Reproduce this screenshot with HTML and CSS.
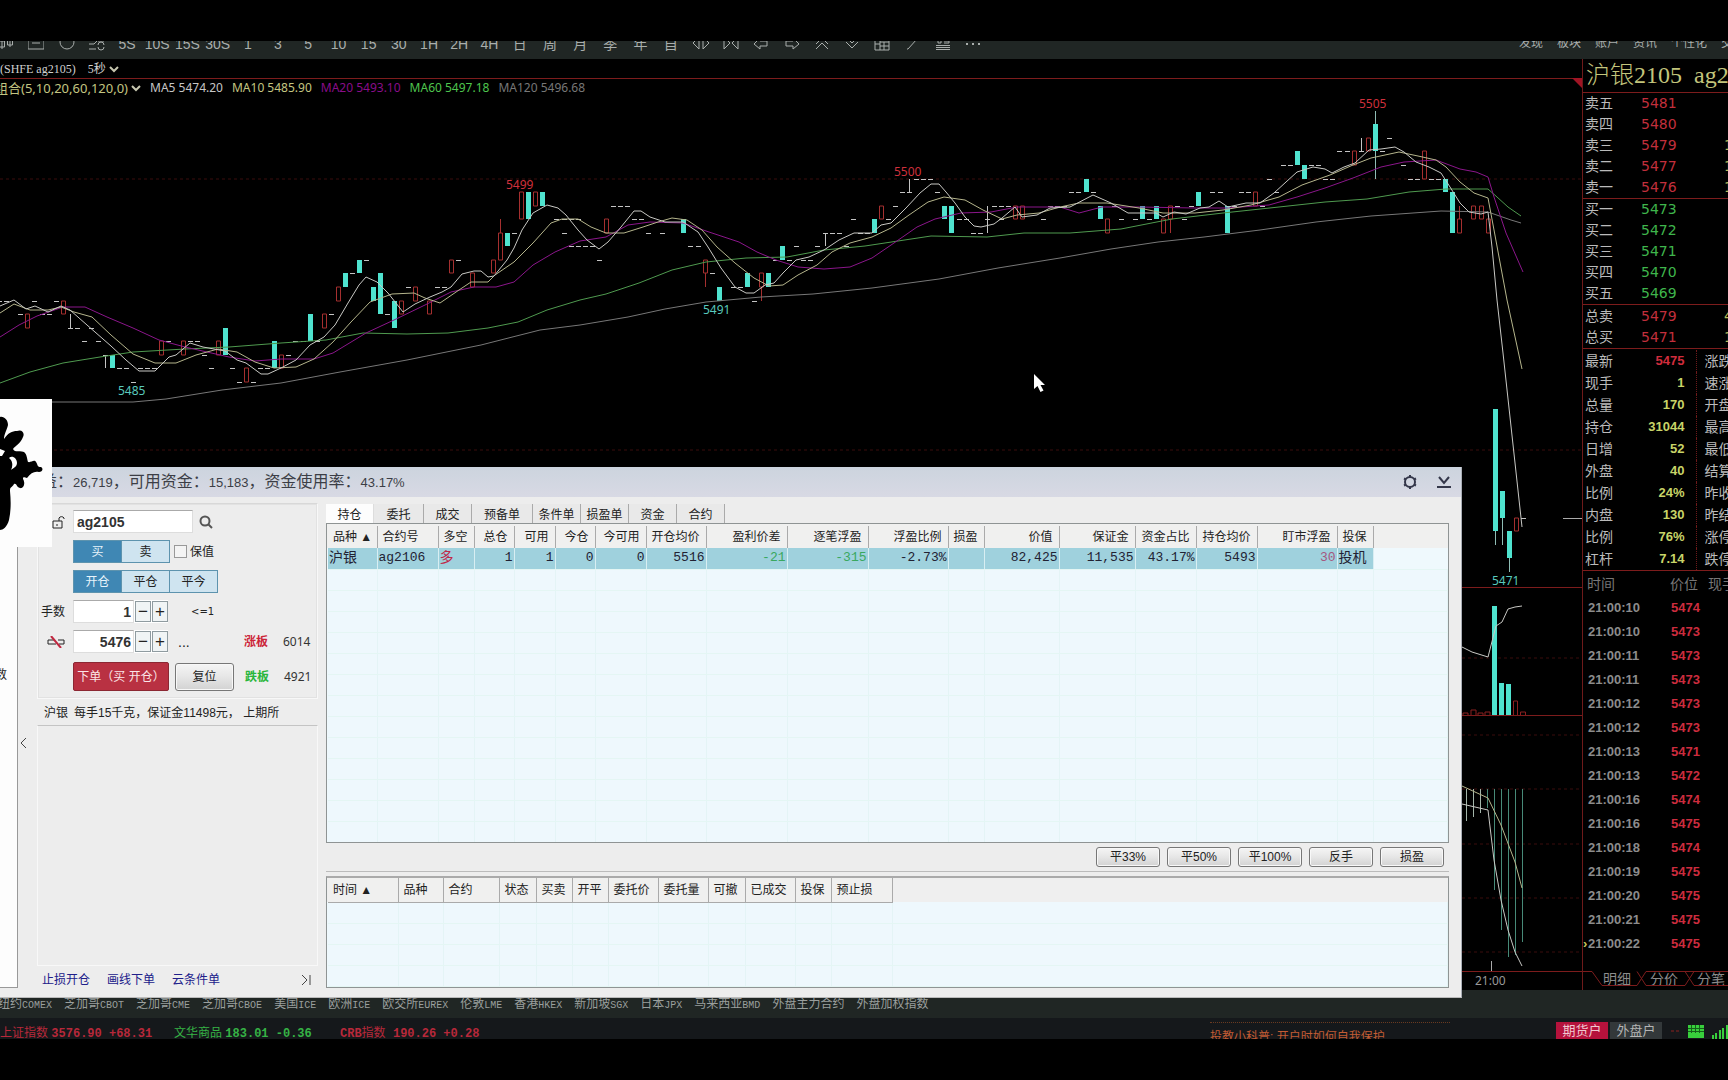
FILE: index.html
```html
<!DOCTYPE html>
<html lang="zh-CN">
<head>
<meta charset="utf-8">
<title>沪银2105 ag2105</title>
<link rel="stylesheet" href="styles.css">
</head>
<body>
<div class="app">
  <header class="toolbar">
    <nav class="periods" id="periods">
      <span><svg viewBox="0 0 16 16"><path d="M4 3v10M1.500 5h5v6h-5zM12 1v10M9.500 3h5v6h-5z"/></svg></span>
      <span><svg viewBox="0 0 16 16"><path d="M0 1v12h16V1M4 7h8"/></svg></span>
      <span><svg viewBox="0 0 16 16"><circle cx="8" cy="6" r="7"/></svg></span>
      <span><svg viewBox="0 0 16 16"><path d="M0 8h5l3-3M0 13h7M9 9a3 3 0 0 1 6 0M15 11a3 3 0 0 1-6 0M9 5h6"/></svg></span>
      <span>5S</span><span>10S</span><span>15S</span><span>30S</span><span>1</span><span>3</span><span>5</span><span>10</span><span>15</span><span>30</span><span>1H</span><span>2H</span><span>4H</span><span>日</span><span>周</span><span>月</span><span>季</span><span>年</span><span>自</span>
      <span><svg viewBox="0 0 16 16"><path d="M6 1v12L0 7zM10 1v12l6-6z"/></svg></span>
      <span><svg viewBox="0 0 16 16"><path d="M1 1v12l6-6zM15 1v12L9 7z"/></svg></span>
      <span><svg viewBox="0 0 16 16"><path d="M7 2 1 8l6 5v-3h7V5H7z"/></svg></span>
      <span><svg viewBox="0 0 16 16"><path d="m9 2 6 6-6 5v-3H2V5h7z"/></svg></span>
      <span><svg viewBox="0 0 16 16"><path d="m2 8 6-6 6 6M2 13l6-6 6 6"/></svg></span>
      <span><svg viewBox="0 0 16 16"><path d="m2 6 6 6 6-6M2 1l6 6 6-6"/></svg></span>
      <span><svg viewBox="0 0 16 16"><path d="M1 1h14v13H1zM6 1v13M6 6h9M6 10h9M10 6v8M1 8h5"/></svg></span>
      <span><svg viewBox="0 0 16 16"><path d="M3 13h1l9-10"/></svg></span>
      <span><svg viewBox="0 0 16 16"><path d="M1 9.500h14M1 11.500h14M1 13.500h14M3 2v5h3V2M9 7h5V5H9V2h5"/></svg></span>
      <span><svg viewBox="0 0 16 16"><path class="dots" d="M1 8h2M7 8h2M13 8h2"/></svg></span>
    </nav>
    <nav class="menus"><a href="#">发现</a><a href="#">板块</a><a href="#">账户</a><a href="#">资讯</a><a href="#">个性化</a><a href="#">交易</a></nav>
  </header>

  <main class="workspace">
    <section class="chart">
      <div class="symbol"><span>(SHFE ag2105)</span><span>5秒</span><svg class="chev" viewBox="0 0 10 8"><path d="m1 2 4 4 4-4"/></svg></div>
      <div class="legend"><span class="ma10">组合(5,10,20,60,120,0)</span><svg class="chev" viewBox="0 0 10 8"><path d="m1 2 4 4 4-4"/></svg><span class="ma5">MA5 5474.20</span><span class="ma10">MA10 5485.90</span><span class="ma20">MA20 5493.10</span><span class="ma60">MA60 5497.18</span><span class="ma120">MA120 5496.68</span></div>
      <svg class="plot" id="plot" viewBox="0 96 1582 894" preserveAspectRatio="xMaxYMin meet">
        <g class="grid"><path d="M0 179H1582M0 450H1582M1462 658H1582M1462 735H1582M1462 789H1582M1462 844H1582M1462 898H1582M1462 952H1582"/></g>
        <path class="frame" d="M1462 587.500H1582M1462 715.500H1582M1462 971.500H1582"/>
        <g id="candles"></g>
        <polyline class="line l120" points="52,402 133,402 166,399 222,390 281,383 340,372 407,360 481,345 540,330 580,325 628,317 665,309 706,302 761,297 813,294 872,288 939,279 998,268 1060,258 1111,249 1158,242 1204,237 1260,230 1316,222 1371,216 1441,211 1488,212 1511,220 1521,223"/>
        <polyline class="line l60" points="0,383 30,372 63,363 100,357 133,352 185,349 229,347 281,343 326,340 363,333 407,334 448,333 488,328 518,322 547,310 580,300 606,294 639,283 672,270 706,262 746,258 787,257 824,250 865,246 898,241 931,236 987,237 1024,233 1070,233 1121,229 1172,219 1223,213 1279,207 1325,202 1367,199 1409,192 1446,189 1488,189 1497,197 1508,207 1521,216"/>
        <polyline class="line l20" points="0,337 19,325 37,316 63,307 85,307 107,317 133,328 159,340 185,347 207,352 229,357 255,361 281,359 314,359 333,353 366,333 394,320 425,305 451,292 474,287 496,287 514,282 533,265 555,252 580,241 606,237 628,225 650,222 683,223 709,232 739,242 757,252 776,260 798,267 824,269 850,267 872,258 894,243 917,227 935,219 961,213 991,212 1017,207 1060,207 1079,213 1102,207 1139,207 1195,208 1228,208 1269,205 1297,197 1325,188 1353,178 1381,167 1404,162 1436,160 1460,169 1476,172 1488,177 1494,197 1506,233 1523,272"/>
        <polyline class="line l10" points="0,313 14,304 30,310 48,310 61,307 74,312 92,317 111,335 133,354 155,363 176,363 196,355 218,349 237,352 255,362 274,368 296,367 314,359 333,342 351,322 370,302 392,294 414,293 425,298 440,303 459,290 471,282 488,282 495,275 514,262 533,243 551,223 562,219 578,219 591,227 606,233 624,233 643,227 658,222 672,218 687,220 702,230 717,247 735,263 754,278 769,286 783,285 798,275 817,265 832,252 850,243 872,237 891,228 909,215 928,202 944,197 965,200 983,210 1002,219 1017,215 1039,213 1060,207 1079,203 1107,203 1139,208 1163,213 1195,213 1223,210 1251,205 1279,197 1302,185 1330,175 1353,165 1371,158 1399,152 1418,156 1436,160 1446,167 1460,182 1474,193 1488,198 1494,230 1507,300 1522,369"/>
        <polyline class="line l5" points="0,306 14,300 26,309 35,306 48,312 61,306 70,310 87,325 111,346 126,360 139,371 155,371 169,357 176,355 190,343 203,347 225,351 237,360 246,363 261,374 268,374 281,368 296,360 310,345 324,337 335,325 348,303 359,285 366,277 377,282 388,293 403,312 415,304 430,297 442,292 451,287 462,274 474,271 481,271 488,277 494,276 507,260 514,248 522,230 533,213 547,205 558,208 566,215 578,230 587,240 599,249 608,242 621,227 634,211 641,211 650,217 665,222 683,222 698,232 708,247 721,268 735,287 746,293 754,293 765,285 774,283 783,273 796,260 809,257 824,250 839,240 854,233 872,233 881,225 891,223 906,208 920,193 931,184 939,184 946,192 955,203 965,217 974,226 981,227 994,224 1002,218 1015,207 1022,217 1037,215 1050,208 1070,207 1093,195 1111,203 1128,213 1156,213 1163,217 1174,212 1186,214 1200,208 1209,207 1219,201 1228,207 1246,203 1260,203 1274,193 1286,182 1297,172 1313,167 1325,169 1332,173 1344,167 1355,163 1369,150 1381,149 1395,147 1404,152 1416,162 1429,167 1441,173 1450,187 1460,203 1469,212 1481,214 1488,212 1492,247 1497,300 1503,353 1522,527"/>
        <path class="volume" d="M1492 606h5v109h-5zM1499 683h5v32h-5zM1506 684h5v31h-5z"/>
        <path class="volume-up" d="M1463 715v-2h5v2M1471 715v-5h5v5M1478 715v-2h5v2M1485 715v-3h5v3M1513.500 715v-14h4v14M1520.500 715v-3h5v3"/>
        <path class="macd-bars" d="M1494.500 789V890M1501.500 789V930M1508.500 789V957M1515.500 789V955M1522.500 789V942M1487.500 789V808"/>
        <path class="macd-pale" d="M1466.500 789V821M1473.500 789V817M1480.500 789V813"/>
        <polyline class="line l5" points="1462,647 1472,652 1488,657 1496,626 1502,622 1508,609 1515,607 1522,606"/>
        <polyline class="line l10" points="1462,786 1488,798 1501,825 1515,862 1522,888"/>
        <polyline class="line l5" points="1462,804 1488,810 1494,860 1501,900 1508,930 1515,952 1522,966"/>
        <path class="tick" d="M1491.500 961V971M1563 518.500H1582"/>
        <g class="mark up"><text x="506" y="189">5499</text><text x="894" y="176">5500</text><text x="1359" y="108">5505</text></g>
        <g class="mark down"><text x="118" y="395">5485</text><text x="703" y="314">5491</text><text x="1492" y="585">5471</text></g>
        <g class="mark time"><text x="1475" y="985">21:00</text></g>
        <path class="pointer" d="M1034 374v15l3.500-3 3 6 3-1.500-3-5.500h4.500z"/>
      </svg>
      <i class="corner"></i>
    </section>

    <aside class="quote">
      <h1>沪银2105 <span>ag2105</span></h1>
      <table class="depth sell"><tbody>
        <tr><th>卖五</th><td>5481</td><td></td></tr>
        <tr><th>卖四</th><td>5480</td><td></td></tr>
        <tr><th>卖三</th><td>5479</td><td>1</td></tr>
        <tr><th>卖二</th><td>5477</td><td>1</td></tr>
        <tr><th>卖一</th><td>5476</td><td>1</td></tr>
      </tbody></table>
      <table class="depth buy"><tbody>
        <tr><th>买一</th><td>5473</td><td></td></tr>
        <tr><th>买二</th><td>5472</td><td></td></tr>
        <tr><th>买三</th><td>5471</td><td></td></tr>
        <tr><th>买四</th><td>5470</td><td></td></tr>
        <tr><th>买五</th><td>5469</td><td></td></tr>
      </tbody></table>
      <table class="depth sell sums"><tbody>
        <tr><th>总卖</th><td>5479</td><td>4</td></tr>
        <tr><th>总买</th><td>5471</td><td>1</td></tr>
      </tbody></table>
      <table class="stats"><tbody>
        <tr><th>最新</th><td class="red">5475</td><th>涨跌</th></tr>
        <tr><th>现手</th><td>1</td><th>速涨</th></tr>
        <tr><th>总量</th><td>170</td><th>开盘</th></tr>
        <tr><th>持仓</th><td>31044</td><th>最高</th></tr>
        <tr><th>日增</th><td>52</td><th>最低</th></tr>
        <tr><th>外盘</th><td>40</td><th>结算</th></tr>
        <tr><th>比例</th><td>24%</td><th>昨收</th></tr>
        <tr><th>内盘</th><td>130</td><th>昨结</th></tr>
        <tr><th>比例</th><td>76%</td><th>涨停</th></tr>
        <tr><th>杠杆</th><td>7.14</td><th>跌停</th></tr>
      </tbody></table>
      <table class="trades">
        <thead><tr><th>时间</th><th>价位</th><th>现手</th></tr></thead>
        <tbody>
        <tr><td>21:00:10</td><td>5474</td><td></td></tr>
        <tr><td>21:00:10</td><td>5473</td><td></td></tr>
        <tr><td>21:00:11</td><td>5473</td><td></td></tr>
        <tr><td>21:00:11</td><td>5473</td><td></td></tr>
        <tr><td>21:00:12</td><td>5473</td><td></td></tr>
        <tr><td>21:00:12</td><td>5473</td><td></td></tr>
        <tr><td>21:00:13</td><td>5471</td><td></td></tr>
        <tr><td>21:00:13</td><td>5472</td><td></td></tr>
        <tr><td>21:00:16</td><td>5474</td><td></td></tr>
        <tr><td>21:00:16</td><td>5475</td><td></td></tr>
        <tr><td>21:00:18</td><td>5474</td><td></td></tr>
        <tr><td>21:00:19</td><td>5475</td><td></td></tr>
        <tr><td>21:00:20</td><td>5475</td><td></td></tr>
        <tr><td>21:00:21</td><td>5475</td><td></td></tr>
        <tr class="now"><td>21:00:22</td><td>5475</td><td></td></tr>
        </tbody>
      </table>
      <nav class="quote-tabs">
        <svg viewBox="0 0 145 16"><path d="M0 .5H9L19 14.500H54L63 .5H145M54 .500 63 14.500H102L111 .5M102 .5 111 14.500H145"/></svg>
        <a href="#">明细</a><a href="#">分价</a><a href="#">分笔</a>
      </nav>
    </aside>

    <section class="window">
      <div class="titlebar">
        <p>益：<b>26,719</b>，可用资金：<b>15,183</b>，资金使用率：<b>43.17%</b></p>
        <button class="icon" aria-label="设置"><svg viewBox="0 0 16 16"><circle cx="8" cy="8" r="5"/><path d="M8 1v2M8 13v2M2 4.500l2 1M12 10.500l2 1M14 4.500l-2 1M4 10.500l-2 1"/></svg></button>
        <button class="icon" aria-label="最小化"><svg viewBox="0 0 16 16"><path d="m3 3 5 6 5-6M1 13h14"/></svg></button>
      </div>
      <div class="panes">
        <div class="side"><span>数</span></div>
        <button class="fold" aria-label="收起"><svg viewBox="0 0 8 12"><path d="M6 1 1 6l5 5"/></svg></button>
        <div class="order">
          <form class="ticket">
            <div class="row">
              <span class="lead"><svg class="lock" viewBox="0 0 14 15"><path d="M1 7h9v7H1zM5 10v2M7 7V4a3 3 0 0 1 5 0v1"/></svg></span>
              <input class="code" type="text" value="ag2105" aria-label="合约">
              <svg class="search" viewBox="0 0 14 14"><circle cx="6" cy="6" r="4.500"/><path d="m9 9 4 4"/></svg>
            </div>
            <div class="row"><span class="lead"></span><span class="seg"><button type="button" class="on">买</button><button type="button">卖</button></span><label class="hedge"><input type="checkbox">保值</label></div>
            <div class="row"><span class="lead"></span><span class="seg"><button type="button" class="on">开仓</button><button type="button">平仓</button><button type="button">平今</button></span></div>
            <div class="row"><label class="lead" for="qty">手数</label><span class="spin"><input id="qty" type="text" value="1"><button type="button">−</button><button type="button">+</button></span><span class="cap">&lt;=1</span></div>
            <div class="row"><span class="lead"><svg class="nolink" viewBox="0 0 18 12"><path d="M7 4H1v4h8M11 4h6v4h-5"/><path class="slash" d="m4 0 10 12"/></svg></span><span class="spin"><input type="text" value="5476" aria-label="价格"><button type="button">−</button><button type="button">+</button></span><span class="more">...</span><span class="limit up">涨板</span><span class="bound">6014</span></div>
            <div class="row last"><span class="lead"></span><button type="button" class="submit">下单（买 开仓）</button><button type="button" class="btn reset">复位</button><span class="limit down">跌板</span><span class="bound">4921</span></div>
          </form>
          <p class="info"><span>沪银</span>每手15千克，保证金11498元， 上期所</p>
          <div class="blank"></div>
          <nav class="links"><a href="#">止损开仓</a><a href="#">画线下单</a><a href="#">云条件单</a><svg viewBox="0 0 10 12"><path d="m1 1 5 5-5 5M9 1v10"/></svg></nav>
        </div>
        <div class="books">
          <nav class="tabs"><button class="on">持仓</button><button>委托</button><button>成交</button><button class="wide">预备单</button><button>条件单</button><button>损盈单</button><button>资金</button><button>合约</button></nav>
          <div class="sheet positions">
            <table>
              <colgroup><col style="width:49px"><col style="width:61px"><col style="width:36px"><col style="width:40px"><col style="width:41px"><col style="width:40px"><col style="width:51px"><col style="width:60px"><col style="width:81px"><col style="width:81px"><col style="width:80px"><col style="width:36px"><col style="width:75px"><col style="width:76px"><col style="width:61px"><col style="width:61px"><col style="width:80px"><col style="width:36px"><col></colgroup>
              <thead><tr><th class="l">品种 ▲</th><th class="l">合约号</th><th>多空</th><th>总仓</th><th>可用</th><th>今仓</th><th>今可用</th><th>开仓均价</th><th>盈利价差</th><th>逐笔浮盈</th><th>浮盈比例</th><th>损盈</th><th>价值</th><th>保证金</th><th>资金占比</th><th>持仓均价</th><th>盯市浮盈</th><th>投保</th><th class="rest"></th></tr></thead>
              <tbody data-blank="13"><tr class="sel"><td class="l">沪银</td><td class="l">ag2106</td><td class="l r">多</td><td>1</td><td>1</td><td>0</td><td>0</td><td>5516</td><td class="g">-21</td><td class="g">-315</td><td>-2.73%</td><td></td><td>82,425</td><td>11,535</td><td>43.17%</td><td>5493</td><td class="m">30</td><td class="l">投机</td><td class="rest"></td></tr></tbody>
            </table>
          </div>
          <div class="actions"><button class="btn">平33%</button><button class="btn">平50%</button><button class="btn">平100%</button><button class="btn">反手</button><button class="btn">损盈</button></div>
          <div class="sheet orders">
            <table>
              <colgroup><col style="width:70px"><col style="width:45px"><col style="width:56px"><col style="width:37px"><col style="width:36px"><col style="width:36px"><col style="width:50px"><col style="width:50px"><col style="width:37px"><col style="width:50px"><col style="width:36px"><col style="width:61px"><col></colgroup>
              <thead><tr><th>时间 ▲</th><th>品种</th><th>合约</th><th>状态</th><th>买卖</th><th>开平</th><th>委托价</th><th>委托量</th><th>可撤</th><th>已成交</th><th>投保</th><th>预止损</th><th class="rest"></th></tr></thead>
              <tbody data-blank="4"></tbody>
            </table>
          </div>
        </div>
      </div>
      <svg class="brush" viewBox="0 0 52 148"><path fill-rule="evenodd" d="M0 18C4 17 8 21 8 26C7 31 4 35 4 40C8 34 12 32 17 32C22 30 25 34 23 38C21 44 15 47 13 50C15 54 20 51 24 53C27 55 27 60 28 63C31 64 34 60 36 63C38 66 37 68 41 68C44 70 42 73 39 73C34 72 31 74 27 79C25 79 23 77 23 80C26 85 23 90 20 89C16 88 17 84 14 85C12 89 10 87 10 92C11 102 11 112 9 121C7 128 3 131 0 131ZM9 59C12 56 17 59 17 64C17 68 13 69 11 71C13 67 13 62 9 59ZM0 50 5 52 2 57 0 57Z"/></svg>
    </section>
  </main>

  <nav class="markets"><a href="#">纽约<b>COMEX</b></a><a href="#">芝加哥<b>CBOT</b></a><a href="#">芝加哥<b>CME</b></a><a href="#">芝加哥<b>CBOE</b></a><a href="#">美国<b>ICE</b></a><a href="#">欧洲<b>ICE</b></a><a href="#">欧交所<b>EUREX</b></a><a href="#">伦敦<b>LME</b></a><a href="#">香港<b>HKEX</b></a><a href="#">新加坡<b>SGX</b></a><a href="#">日本<b>JPX</b></a><a href="#">马来西亚<b>BMD</b></a><a href="#">外盘主力合约</a><a href="#">外盘加权指数</a></nav>
  <footer class="status">
    <span class="idx red">上证指数 <b>3576.90 +68.31</b></span>
    <span class="idx green">文华商品 <b>183.01 -0.36</b></span>
    <span class="idx red"><b>CRB</b>指数 <b class="far">190.26 +0.28</b></span>
    <p class="news">投教小科普: 开户时如何自我保护</p>
    <button class="acct on">期货户</button><button class="acct">外盘户</button>
    <svg class="signal" viewBox="0 0 64 17"><path class="dash" d="M7 9h3M12 9h3"/><path class="net" d="M24 3h16v13H24z"/><path class="mesh" d="M24 6.500h16M24 9.500h16M27.500 3v8M31.500 3v8M35.500 3v8"/><path class="net" d="M48 13h2v4h-2zM51 11h2v6h-2zM55 8h2v9h-2zM58 6h2v11h-2zM62 3h2v14h-2z"/></svg>
  </footer>
</div>
<script src="chart.js"></script>
</body>
</html>
```
FILE: styles.css
```css
* { box-sizing: border-box; }
html { background: #000; }
body {
  margin: 0;
  background: #000;
  font: 12px/16px "Liberation Sans", "Noto Sans CJK SC", sans-serif;
  color: #ccc;
}
p, h1 { margin: 0; font-weight: normal; }
a { color: inherit; text-decoration: none; }
button { font: inherit; color: inherit; padding: 0; margin: 0; border: 0; background: none; }
table { border-collapse: collapse; table-layout: fixed; width: 100%; }
th, td { padding: 0; font-weight: normal; text-align: left; white-space: nowrap; overflow: hidden; }
svg { fill: none; stroke: currentColor; display: block; flex: none; }

.app { min-height: 100vh; padding: 41px 0; display: flex; flex-direction: column; overflow: hidden; }

/* top toolbar, scrolled partly out of view */
.toolbar { height: 18px; background: #202624; display: flex; justify-content: space-between; overflow: hidden; color: #a9aeac; }
.periods { width: 997px; margin: -7px 0 0 -9px; display: grid; grid-template-columns: repeat(33, 1fr); font-size: 14px; line-height: 20px; }
.periods span { display: flex; justify-content: center; align-items: center; height: 20px; }
.periods svg { width: 16px; height: 16px; }
.periods .dots { stroke-width: 2; }
.menus { margin: -6px 0 0; width: 209px; display: flex; gap: 14px; white-space: nowrap; font-size: 12px; line-height: 16px; }

.workspace { position: relative; flex: 1; display: flex; min-height: 0; }
.chart { position: relative; flex: 1; min-width: 0; display: flex; flex-direction: column; border-right: 1px solid #6e1a1a; }
.symbol { height: 20px; border-bottom: 1px solid #7d1c1c; display: flex; align-items: center; font: 12px/18px "Liberation Serif", "Noto Sans CJK SC", serif; color: #d0d0d0; }
.symbol span + span { margin-left: 12px; }
.chev { width: 10px; height: 8px; margin: 0 0 0 3px; stroke-width: 2; color: #c8c8b0; }
.legend { height: 17px; display: flex; align-items: center; font: 12px/16px "Noto Sans", "Noto Sans CJK SC", sans-serif; white-space: nowrap; }
.legend span { margin-left: 9px; }
.legend span:first-child { margin-left: -5px; font-size: 13px; }
.ma5 { color: #c6c6c6; } .ma10 { color: #c4c682; } .ma20 { color: #8a0d8a; } .ma60 { color: #4ec54e; } .ma120 { color: #777; }
.plot { flex: 1; width: 100%; min-height: 0; overflow: hidden; }
.corner { position: absolute; right: 0; top: 19px; border: 5px solid transparent; border-top-color: #a01424; border-right-color: #a01424; }
.grid { stroke: #3a0c0c; stroke-dasharray: 3 3; }
.frame { stroke: #7d1c1c; }
.line { stroke-width: 1; }
.l5 { stroke: #c8c8c4; } .l10 { stroke: #b5b58c; } .l20 { stroke: #8b168b; } .l60 { stroke: #4f9a4f; } .l120 { stroke: #777; }
.doji { stroke: #c4c4c4; } .rise { stroke: #a52f2f; } .fall { fill: #4fe3cf; stroke: none; } .fallwick { stroke: #8fbdb5; }
.volume { fill: #4fe3cf; stroke: none; } .volume-up { stroke: #8a2020; }
.macd-bars { stroke: #478a78; } .macd-pale { stroke: #a3b5aa; } .tick { stroke: #aaa; }
.mark { font: 12px "Noto Sans", sans-serif; stroke: none; }
.mark.up { fill: #d0303c; } .mark.down { fill: #58c9bd; } .mark.time { fill: #999; }
.pointer { fill: #fff; stroke: none; }

/* quote column */
.quote { width: 145px; flex: none; overflow: hidden; display: flex; flex-direction: column; }
.quote h1 { height: 34px; padding-left: 3px; border-bottom: 1px solid #7d1c1c; font: 24px/33px "Liberation Serif", "Noto Sans CJK SC", serif; font-weight: 300; color: #c3c57c; white-space: nowrap; }
.quote h1 span { margin-left: 6px; }
.depth { border-bottom: 1px solid #7d1c1c; font: 14px/21px "DejaVu Sans", "Noto Sans CJK SC", sans-serif; }
.depth tr { height: 21px; }
.depth th { width: 58px; padding-left: 2px; color: #bbb; }
.depth td { width: 83px; }
.depth td + td { width: 4px; color: #b9bd5a; }
.sell td { color: #c22f3c; } .buy td { color: #3fb54c; }
.sums { margin-top: 1px; }
.stats { margin-top: 1px; border-bottom: 1px solid #7d1c1c; font: 13px/22px "Liberation Sans", "Noto Sans CJK SC", sans-serif; }
.stats tr { height: 22px; }
.stats th { width: 44px; padding-left: 2px; color: #bbb; font-size: 14px; }
.stats td { width: 69px; text-align: right; padding-right: 11px; font-weight: bold; color: #c8d468; border-right: 1px dotted #6e1a1a; }
.stats td.red { color: #d02c3c; }
.stats td + th { width: 32px; padding-left: 8px; }
.trades { margin-top: 1px; font: 13px/24px "Liberation Sans", "Noto Sans CJK SC", sans-serif; color: #8c8c8c; }
.trades th { height: 24px; width: 87px; padding-left: 4px; font-size: 14px; color: #777; }
.trades th + th { width: 38px; padding-left: 0; }
.trades th + th + th { width: 20px; }
.trades td { height: 24px; padding-left: 5px; font-weight: bold; }
.trades td + td { color: #cc2c3e; padding-left: 1px; }
.trades .now td:first-child { padding-left: 0; }
.trades .now td:first-child::before { content: "›"; display: inline-block; width: 5px; color: #c8c860; }
.quote-tabs { position: relative; margin-top: auto; height: 19px; padding-left: 20px; display: flex; gap: 19px; font-size: 14px; line-height: 16px; color: #8c8c8c; white-space: nowrap; }
.quote-tabs svg { position: absolute; left: 0; top: 0; width: 145px; height: 16px; color: #7d1c1c; }

/* trading window */
.window { position: absolute; left: 0; right: 266px; top: 408px; bottom: -8px; background: #ededed; color: #222; display: flex; flex-direction: column; border-right: 1px solid #a9adb5; border-bottom: 1px solid #bbb; }
.titlebar { height: 30px; flex: none; padding: 0 9px 0 41px; display: flex; align-items: center; gap: 18px; background: linear-gradient(#ccd4de, #d8d9e4); }
.titlebar p { flex: 1; font-size: 16px; line-height: 30px; color: #3c3e46; white-space: nowrap; }
.titlebar b { font-size: 13px; font-weight: normal; }
.icon svg { width: 16px; height: 16px; stroke-width: 2; color: #34374a; }
.panes { flex: 1; min-height: 0; display: flex; padding: 6px 12px 9px 0; }
.side { width: 18px; flex: none; margin-top: -6px; padding-top: 170px; background: #fdfdfd; border-right: 1px solid #999; border-bottom: 1px solid #999; overflow: hidden; }
.side span { margin-left: -5px; }
.fold { width: 19px; flex: none; color: #444; padding: 0 0 6px 2px; }
.fold svg { width: 8px; height: 12px; }
.order { width: 281px; flex: none; display: flex; flex-direction: column; margin-bottom: -6px; }
.ticket { border: 1px solid #f8f8f8; border-top-color: #d8d8d8; outline: 1px solid #e2e2e2; outline-offset: -2px; padding: 6px 0 7px; display: flex; flex-direction: column; gap: 7px; }
.row { height: 23px; display: flex; align-items: center; }
.row.last { height: 31px; padding-top: 2px; }
.lead { width: 35px; padding-left: 3px; flex: none; }
.lock { width: 14px; height: 15px; margin-left: 11px; }
.nolink { width: 18px; height: 12px; margin-left: 6px; }
.slash { stroke: #c02840; stroke-width: 2; }
.ticket input[type=text] { border: 1px solid #ddd; border-top-color: #aaa; background: #fff; height: 23px; padding: 0 3px; font: bold 14px/20px "Liberation Sans", sans-serif; color: #333; min-width: 0; }
.ticket .code { width: 120px; flex: none; }
.search { width: 14px; height: 14px; margin-left: 6px; stroke-width: 2; color: #555; }
.seg { display: flex; border: 1px solid #5d93ae; }
.seg button { width: 47px; height: 21px; background: #cfe4f0; }
.seg button + button { border-left: 1px solid #5d93ae; width: 48px; }
.seg .on { background: #3f87b4; color: #e8f4fb; }
.hedge { display: flex; align-items: center; gap: 3px; margin-left: 4px; }
.hedge input { appearance: none; width: 13px; height: 13px; margin: 0; border: 1px solid #999; background: #f4f4f4; }
.spin { display: flex; align-items: center; gap: 1px; width: 95px; flex: none; background: #fff; }
.spin input { flex: 1; text-align: right; }
.ticket .spin input { padding: 0 2px 0 0; }
.spin button { width: 16px; height: 21px; border: 1px solid #8f9ba0; background: #f0f4f5; font: 17px/17px "Liberation Sans", sans-serif; }
.cap { margin-left: 23px; font-family: "DejaVu Sans", sans-serif; font-size: 10px; }
.more { margin-left: 10px; width: 66px; font-size: 14px; }
.limit { width: 39px; font-weight: bold; }
.limit.up { color: #cc2438; } .limit.down { color: #28b63a; }
.last .limit { margin-left: 11px; }
.bound { font: 12px "Noto Sans", sans-serif; color: #333; }
.submit { width: 96px; height: 29px; flex: none; background: #b93142; border: 1px solid #8c2733; border-radius: 2px; color: #fbe6e8; white-space: nowrap; }
.btn { border: 1px solid #777; border-radius: 3px; background: linear-gradient(#f5f5f5, #e6e6e6 50%, #d2d2d2); box-shadow: inset 0 0 0 1px #f8f8f8; }
.reset { width: 59px; height: 28px; margin-left: 6px; flex: none; }
.info { height: 26px; padding-left: 7px; line-height: 28px; white-space: nowrap; }
.info span { margin-right: 6px; }
.blank { flex: 1; border: 1px solid #f8f8f8; border-top-color: #c4c4c4; }
.links { height: 28px; padding: 0 7px 0 5px; display: flex; align-items: center; gap: 17px; color: #20208a; }
.links svg { width: 10px; height: 12px; margin-left: auto; color: #444; }

.books { flex: 1; min-width: 0; margin-left: 8px; display: flex; flex-direction: column; }
.tabs { height: 20px; display: flex; padding-top: 1px; }
.tabs button { width: 48px; border-right: 1px solid #aaa; line-height: 22px; background: #e9e9e9; }
.tabs button:nth-child(2) { width: 50px; }
.tabs .wide { width: 61px; }
.tabs .on { background: #fdfdfd; border-color: #ddd; }
.sheet { border: 1px solid #8f9494; overflow: hidden; }
.positions { flex: none; padding: 2px 0 0 1px; height: 320px; background: linear-gradient(#f0f0ef 24px, #eff9fd 24px); }
.sheet th { height: 22px; text-align: right; padding: 0 6px 0 0; background: #f0f0ef; border-right: 1px solid #aaa; }
.sheet th.l, .orders th:not(.rest) { text-align: left; padding-left: 5px; padding-right: 0; }
.sheet .rest { border-right: 0; background: transparent; }
.sheet td { height: 21px; border-right: 1px solid #e4f4f6; border-bottom: 1px solid #e4f6f4; background: #eef8fd; }
.sel td { font: 13px/20px "Liberation Mono", "Noto Sans CJK SC", monospace; color: #223; text-align: right; padding-right: 1px; }
.sheet .sel td:not(.rest) { background: #9fd1dd; border-right-color: #d8eef2; }
.sel td.l { text-align: left; padding: 0 0 0 1px; }
.sel td.l:not(:nth-child(2)) { font-size: 14px; }
.sel .g { color: #3aa860; } .sel .m { color: #a5587f; } .sel td.r { color: #c02848; }
.actions { height: 29px; margin-bottom: 4px; border-bottom: 1px solid #bbb; padding: 4px 5px 0; display: flex; gap: 7px; justify-content: flex-end; }
.actions .btn { width: 64px; height: 20px; line-height: 16px; }
.orders { border-top: 2px solid #aaa; padding-left: 1px; flex: 1; min-height: 0; background: linear-gradient(#efefef 24px, #eff9fd 24px); }
.orders th { height: 24px; border-bottom: 1px solid #aaa; }
.orders th.rest { border-bottom: 0; }
.brush { position: absolute; left: 0; top: -68px; width: 52px; height: 148px; background: #fdfdfd; fill: #000; stroke: none; }

/* bottom strips */
.markets { height: 28px; background: #202624; display: flex; gap: 12px; padding-top: 6px; margin-left: -2px; white-space: nowrap; color: #9a9f9d; }
.markets b { font: 10px/16px "Liberation Mono", monospace; }
.status { height: 21px; background: #15181b; display: flex; align-items: flex-start; overflow: hidden; white-space: nowrap; line-height: 16px; }
.status b { font: bold 12px/16px "Liberation Mono", monospace; }
.idx { padding-top: 7px; width: 174px; }
.idx + .idx { width: 166px; }
.red { color: #b8283a; } .green { color: #35b345; }
.far { margin-left: 4px; }
.news { margin: 4px 0 0 auto; padding-top: 6px; width: 240px; border-top: 1px dotted #6a3a20; color: #c25c34; }
.acct { width: 52px; height: 17px; margin: 4px 2px 0 0; background: #33383a; color: #b4b4b4; font-size: 13px; line-height: 18px; overflow: hidden; }
.news + .acct { margin-left: 106px; }
.acct.on { background: #b5123c; color: #f0c8d0; }
.signal { width: 64px; height: 17px; margin-top: 4px; stroke: none; }
.net { fill: #38cf3c; } .mesh { stroke: #155f1a; } .dash { stroke: #8c2020; }
```
FILE: chart.js
```javascript
// Prices are written as offsets from 5400; each slot is one 5-second bar.
const slotX = s => Math.round(7.054 * s - 0.8);
const priceY = p => Math.round(178.5 + (100 - p) * 13.57);

// slot, top, bottom, high, low
const rises = [[4,90,89],[9,91,90],[23,88,87],[26,88,87],[31,88,87],[35,86,85],[40,87,86],[46,90,89],[48,92,91],[57,91,90],[59,92,91],[61,91,90],[64,94,93],[67,93,92],[70,94,93],[71,96,94,97,94],[74,99,97],[76,99,98],[86,97,96],[100,94,93,94,92],[108,93,92,93,91],[125,98,97],[144,98,97],[145,98,97],[157,97,96],[165,97,96],[166,98,97,98,96],[178,99,98],[192,102,101],[194,103,102],[202,102,100],[207,97,96,98,96],[209,98,97],[210,98,97],[211,97,96],[215,75,74]];
const falls = [[16,87,86],[32,89,87],[39,88,86],[44,90,88],[49,93,92],[51,94,93],[53,92,91],[54,93,90],[56,91,89],[72,96,95],[75,99,97],[77,99,98],[97,97,96],[102,92,91],[106,93,92],[109,93,92],[111,95,94],[124,97,96],[134,98,97],[135,98,96],[154,100,99],[156,98,97],[162,98,97],[164,98,97],[170,99,98],[174,98,96],[184,102,101],[185,101,100],[195,104,102,105,100],[205,100,99],[206,99,96],[212,83,74,83,73],[213,77,75,77,73],[214,74,72,74,71]];
// price: slots that opened and closed there
const flats = [[91,[0,1,5,8]],[90,[3,6,7]],[89,[10,11,13]],[88,[12,14,24,27,28,42,43,45]],[87,[15,29,41]],[86,[17,18,20,21,22,30,33,37,38]],[85,[19,34,36]],[90,[47,55]],[93,[50]],[94,[52]],[92,[58,62,63]],[94,[65]],[96,[73]],[97,[79,80,81,82,90,91]],[96,[80,92,94]],[95,[81,82,83,84,98,99]],[94,[85]],[98,[87,88,89]],[93,[101]],[92,[104,105]],[91,[107]],[94,[110,112,114,115]],[95,[113,116,120]],[96,[117,118,119,122,123]],[97,[121,126]],[98,[127]],[99,[128,129]],[100,[130,131,132]],[99,[133]],[97,[136,137,140,142,148]],[96,[138,139]],[98,[141,142,143,149,150,151,158,167,169,175,179]],[99,[152,153,155,172,173,176,177,181]],[97,[159,161,163,168]],[100,[180,188,189,200,201,203,204]],[101,[182,183,186,187,199]],[102,[190,191,193,196]],[103,[197]],[75,[216]]];
const stems = [[10,90,89],[15,87,86],[117,96,95],[129,100,99],[140,98,96],[193,103,102]];

const layer = document.getElementById("candles");
function add(cls, d) {
  const path = document.createElementNS("http://www.w3.org/2000/svg", "path");
  path.setAttribute("class", cls);
  path.setAttribute("d", d);
  layer.append(path);
}
const wick = (s, a, b) => `M${slotX(s) + 0.5} ${priceY(a)}V${priceY(b)}`;

for (const [s, top, bottom, high = top, low = bottom] of rises) {
  const x = slotX(s) - 1.5;
  add("rise", `M${x} ${priceY(top)}h4V${priceY(bottom)}h-4z` + wick(s, high, top) + wick(s, bottom, low));
}
for (const [s, top, bottom, high = top, low = bottom] of falls) {
  add("fallwick", wick(s, high, top) + wick(s, bottom, low));
  add("fall", `M${slotX(s) - 2} ${priceY(top)}h5V${priceY(bottom)}h-5z`);
}
for (const [price, slots] of flats) {
  add("doji", slots.map(s => `M${slotX(s) - 2} ${priceY(price) + 0.5}h5`).join(""));
}
for (const [s, a, b] of stems) add("doji", wick(s, a, b));

// Fill the unused rows of each sheet.
for (const body of document.querySelectorAll("[data-blank]")) {
  const columns = body.parentElement.querySelectorAll("col").length;
  for (let i = 0; i < Number(body.dataset.blank); i++) {
    const row = body.insertRow();
    for (let c = 0; c < columns; c++) row.insertCell();
  }
}
```
